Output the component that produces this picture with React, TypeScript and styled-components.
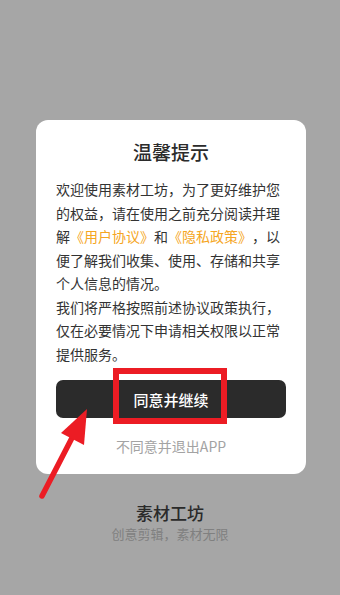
import React from "react";
import styled, { createGlobalStyle } from "styled-components";

const Global = createGlobalStyle`
  html, body { margin: 0; padding: 0; }
  body {
    width: 340px;
    height: 595px;
    overflow: hidden;
    background: #a6a6a6;
    font-family: "Noto Sans CJK SC", "Noto Sans", sans-serif;
  }
`;

const Screen = styled.div`
  position: relative;
  width: 340px;
  height: 595px;
  background: #a6a6a6;
  display: flex;
  flex-direction: column;
  align-items: center;
  padding-top: 120px;
  box-sizing: border-box;
`;

const Card = styled.div`
  width: 270px;
  margin-left: 2px;
  box-sizing: border-box;
  background: #ffffff;
  border-radius: 12px;
  padding: 20px 20px 18px;
  display: flex;
  flex-direction: column;
  align-items: stretch;
`;

const Title = styled.h1`
  margin: 0;
  font-size: 19px;
  line-height: 24px;
  font-weight: 500;
  color: #2b2b2b;
  text-align: center;
`;

const Body = styled.p`
  margin: 14px 0 0;
  font-size: 14px;
  line-height: 23.5px;
  color: #333333;
  white-space: nowrap;
  text-spacing-trim: space-all;
`;

const Link = styled.span`
  color: #f5a623;
`;

const PrimaryButton = styled.button`
  margin-top: 14px;
  height: 38px;
  border: none;
  border-radius: 7px;
  background: #2b2b2b;
  color: #ffffff;
  font-family: inherit;
  font-size: 15px;
  font-weight: 500;
  padding: 0;
`;

const SecondaryButton = styled.button`
  margin-top: 18px;
  height: 20px;
  border: none;
  background: transparent;
  color: #a3a3a3;
  font-family: inherit;
  font-size: 14px;
  line-height: 20px;
  padding: 0;
`;

const Brand = styled.div`
  margin-top: 28px;
  display: flex;
  flex-direction: column;
  align-items: center;
`;

const BrandName = styled.div`
  font-size: 17px;
  line-height: 22px;
  font-weight: 500;
  color: #2a2a2a;
`;

const BrandSlogan = styled.div`
  margin-top: 1px;
  font-size: 13px;
  line-height: 18px;
  color: #808080;
`;

const Highlight = styled.div`
  position: absolute;
  left: 113px;
  top: 368px;
  width: 114px;
  height: 56px;
  box-sizing: border-box;
  border: 6px solid #ec1c24;
  pointer-events: none;
`;

const Annotation = styled.svg`
  position: absolute;
  left: 0;
  top: 0;
  width: 340px;
  height: 595px;
  pointer-events: none;
`;

export default function App() {
  return (
    <>
      <Global />
      <Screen>
        <Card>
          <Title>温馨提示</Title>
          <Body>
            欢迎使用素材工坊，为了更好维护您
            <br />
            的权益，请在使用之前充分阅读并理
            <br />
            解<Link>《用户协议》</Link>和<Link>《隐私政策》</Link>，以
            <br />
            便了解我们收集、使用、存储和共享
            <br />
            个人信息的情况。
            <br />
            我们将严格按照前述协议政策执行，
            <br />
            仅在必要情况下申请相关权限以正常
            <br />
            提供服务。
          </Body>
          <PrimaryButton>同意并继续</PrimaryButton>
          <SecondaryButton>不同意并退出APP</SecondaryButton>
        </Card>
        <Brand>
          <BrandName>素材工坊</BrandName>
          <BrandSlogan>创意剪辑，素材无限</BrandSlogan>
        </Brand>
        <Highlight />
        <Annotation viewBox="0 0 340 595">
          <line x1="42" y1="496" x2="74" y2="434" stroke="#ec1c24" strokeWidth="5.5" strokeLinecap="round" />
          <polygon points="87,409 61,433 84,445" fill="#ec1c24" />
        </Annotation>
      </Screen>
    </>
  );
}
